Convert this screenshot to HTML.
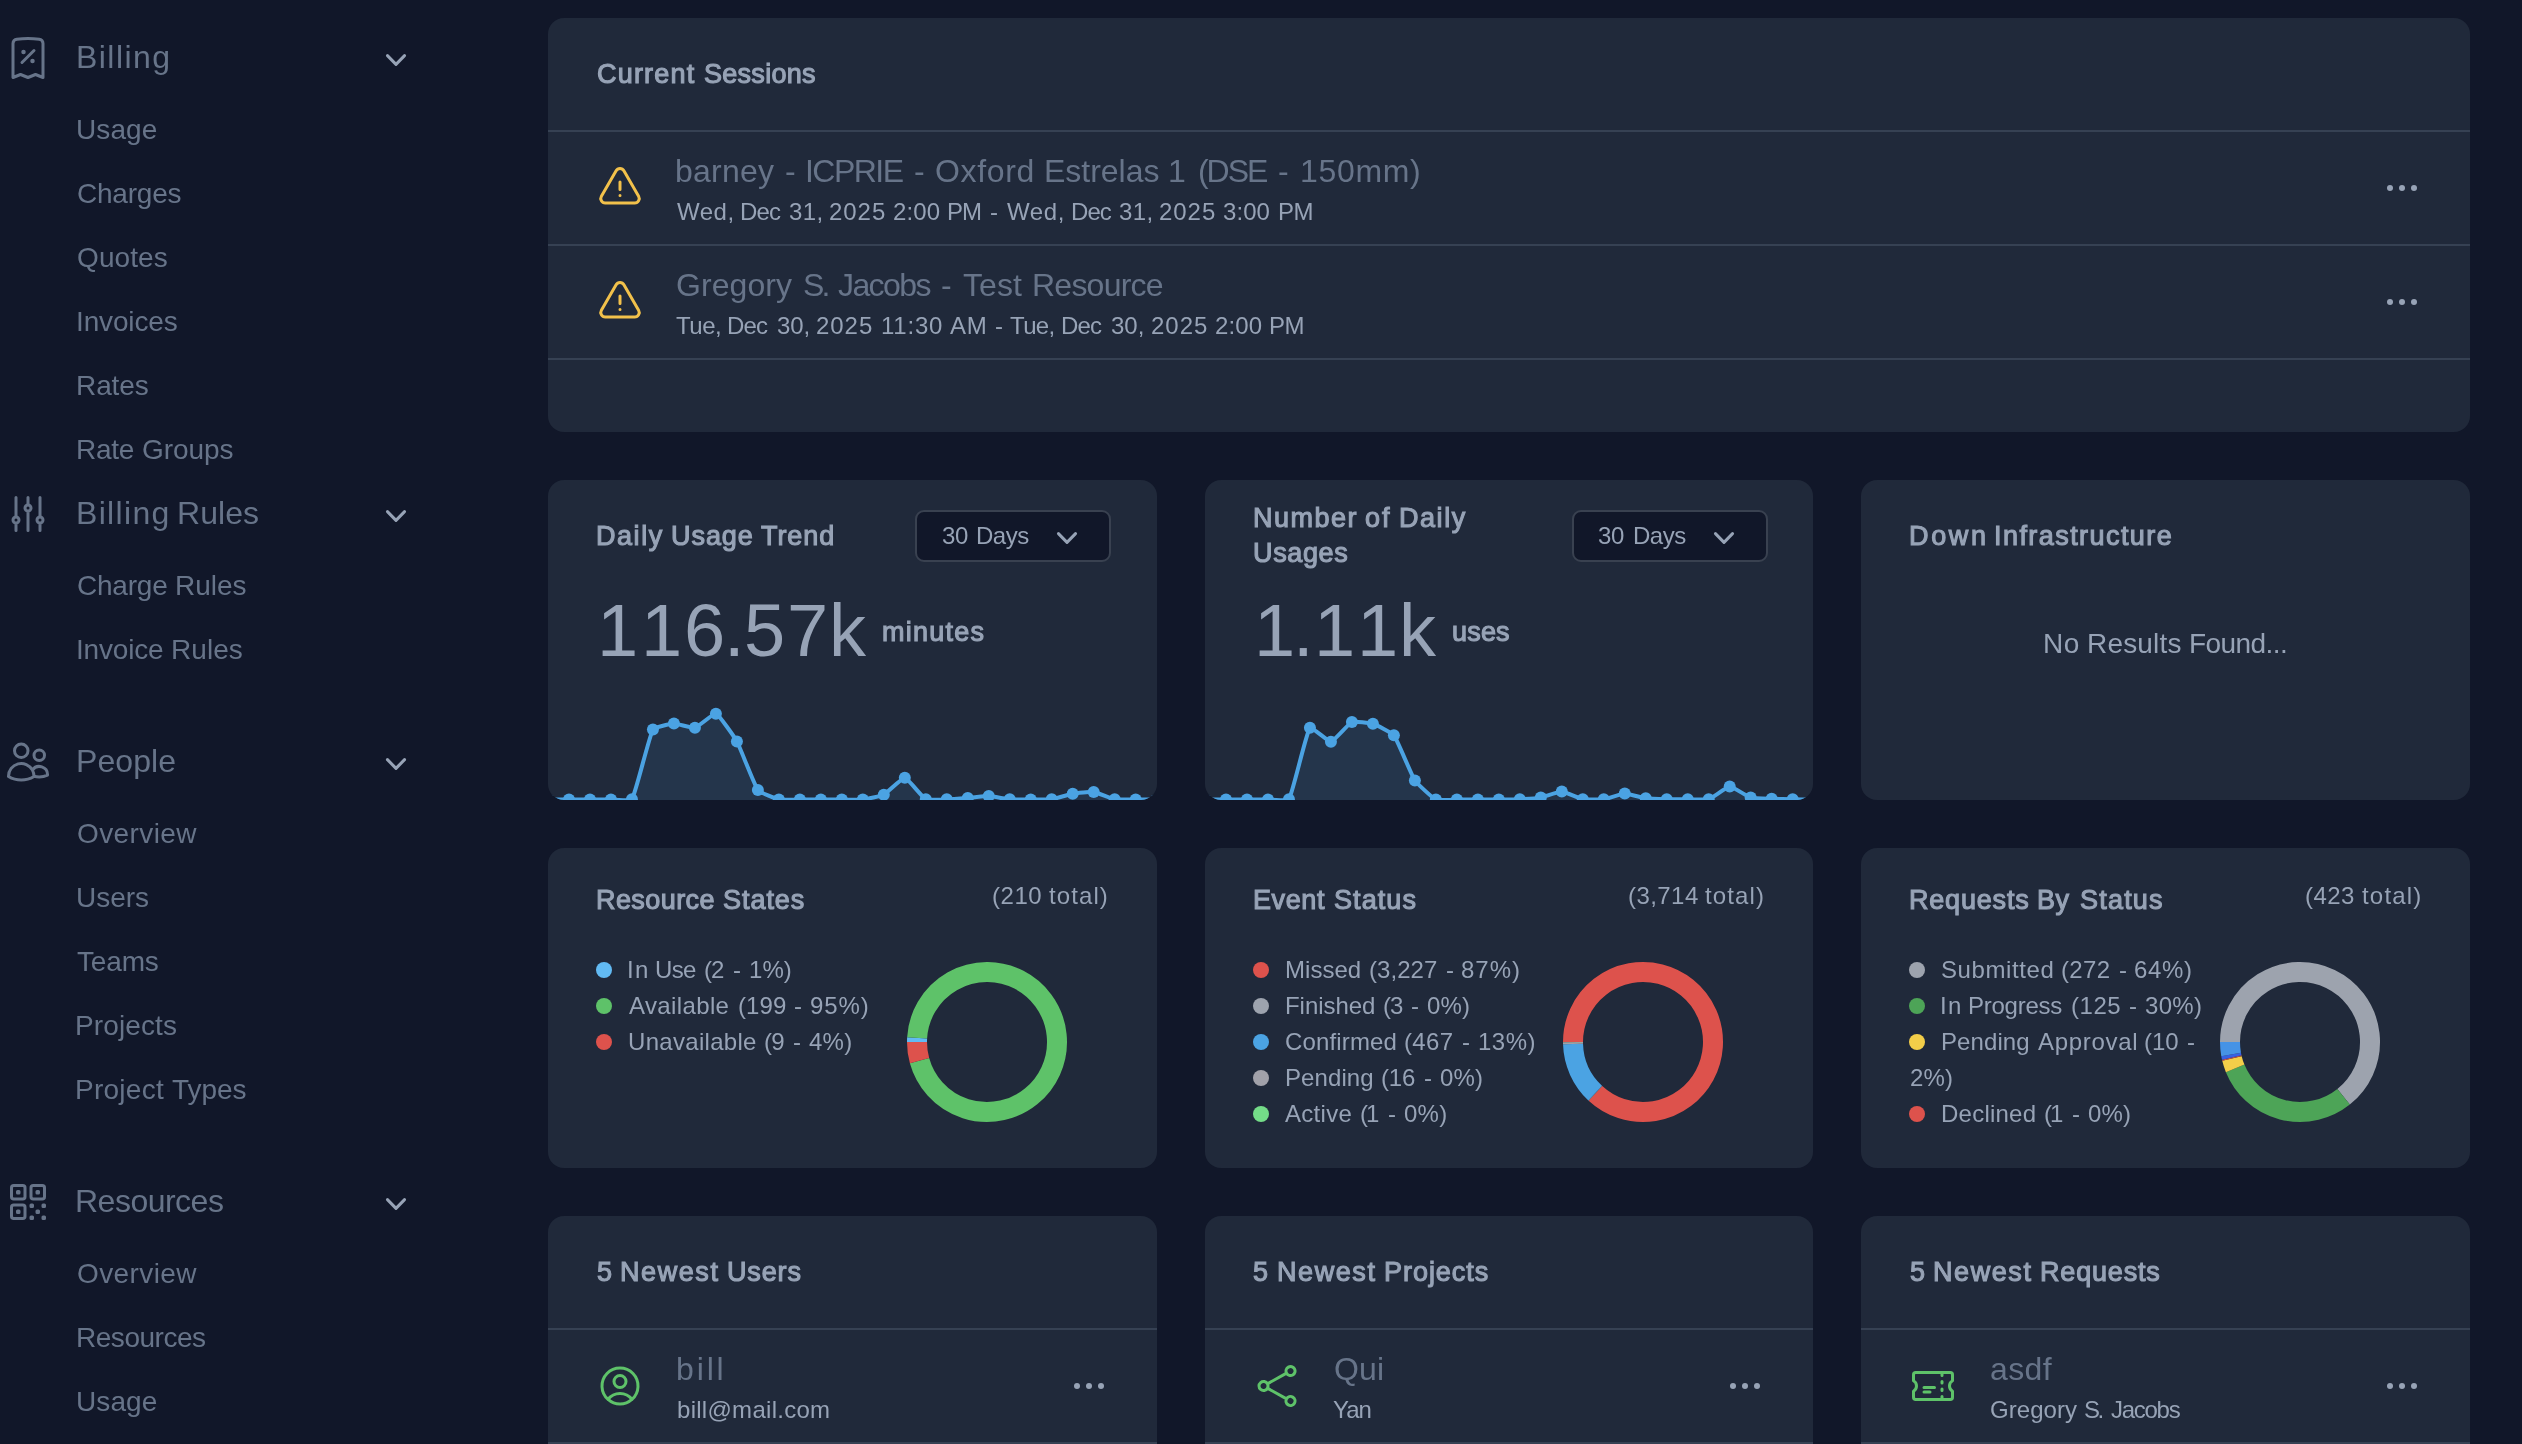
<!DOCTYPE html>
<html lang="en"><head><meta charset="utf-8"><title>Dashboard</title>
<style>
html,body{margin:0;padding:0;background:#111729;width:2522px;height:1444px;overflow:hidden}
body{position:relative;font-family:"Liberation Sans",sans-serif;color:#97a3b6}
.t{position:absolute;white-space:nowrap;line-height:1;display:block;will-change:transform}
.ic{position:absolute;display:block;overflow:visible}
.card{position:absolute;background:#20293a;border-radius:16px;overflow:hidden}
.hr{position:absolute;left:0;right:0;height:2px;background:#364153}
.ld{position:absolute;display:block;width:16px;height:16px;border-radius:50%}
.sel{position:absolute;box-sizing:border-box;width:196px;height:52px;border:2px solid #394150;border-radius:9px;background:#111729}
nav,main{position:absolute;left:0;top:0}
</style></head><body>
<nav><svg class="ic" style="left:4px;top:34px" width="48" height="48" viewBox="0 0 24 24" fill="none" stroke="#677489" stroke-width="1.5" stroke-linecap="round" stroke-linejoin="round"><path d="M9 14.25l6-6m4.5-3.493V21.75l-3.75-1.5-3.75 1.5-3.75-1.5-3.75 1.5V4.757c0-1.108.806-2.057 1.907-2.185a48.507 48.507 0 0111.186 0c1.1.128 1.907 1.077 1.907 2.185zM9.75 9h.008v.008H9.75V9zm.375 0a.375.375 0 11-.75 0 .375.375 0 01.75 0zm4.125 4.5h.008v.008h-.008V13.5zm.375 0a.375.375 0 11-.75 0 .375.375 0 01.75 0z"/></svg><svg class="ic" style="left:4px;top:490px" width="48" height="48" viewBox="0 0 24 24" fill="none" stroke="#677489" stroke-width="1.5" stroke-linecap="round" stroke-linejoin="round"><path d="M6 13.5V3.75m0 9.75a1.5 1.5 0 010 3m0-3a1.5 1.5 0 000 3m0 3.75V16.5m12-3V3.75m0 9.75a1.5 1.5 0 010 3m0-3a1.5 1.5 0 000 3m0 3.75V16.5m-6-9V3.75m0 3.75a1.5 1.5 0 010 3m0-3a1.5 1.5 0 000 3m0 9.75V10.5"/></svg><svg class="ic" style="left:4px;top:738px" width="48" height="48" viewBox="0 0 24 24" fill="none" stroke="#677489" stroke-width="1.5" stroke-linecap="round" stroke-linejoin="round"><path d="M15 19.128a9.38 9.38 0 002.625.372 9.337 9.337 0 004.121-.952 4.125 4.125 0 00-7.533-2.493M15 19.128v-.003c0-1.113-.285-2.16-.786-3.07M15 19.128v.106A12.318 12.318 0 018.624 21c-2.331 0-4.512-.645-6.374-1.766l-.001-.109a6.375 6.375 0 0111.964-3.07M12 6.375a3.375 3.375 0 11-6.75 0 3.375 3.375 0 016.75 0zm8.25 2.25a2.625 2.625 0 11-5.25 0 2.625 2.625 0 015.25 0z"/></svg><svg class="ic" style="left:4px;top:1178px" width="48" height="48" viewBox="0 0 24 24" fill="none" stroke="#677489" stroke-width="1.5" stroke-linecap="round" stroke-linejoin="round"><path d="M3.75 4.875c0-.621.504-1.125 1.125-1.125h4.5c.621 0 1.125.504 1.125 1.125v4.5c0 .621-.504 1.125-1.125 1.125h-4.5A1.125 1.125 0 013.75 9.375v-4.5zM3.75 14.625c0-.621.504-1.125 1.125-1.125h4.5c.621 0 1.125.504 1.125 1.125v4.5c0 .621-.504 1.125-1.125 1.125h-4.5a1.125 1.125 0 01-1.125-1.125v-4.5zM13.5 4.875c0-.621.504-1.125 1.125-1.125h4.5c.621 0 1.125.504 1.125 1.125v4.5c0 .621-.504 1.125-1.125 1.125h-4.5A1.125 1.125 0 0113.500 9.375v-4.5z"/><path d="M6.75 6.75h.75v.75h-.75v-.75zM6.75 16.5h.75v.75h-.75v-.75zM16.5 6.75h.75v.75h-.75v-.75zM13.5 13.5h.75v.75h-.75v-.75zM13.5 19.5h.75v.75h-.75v-.75zM19.5 13.5h.75v.75h-.75v-.75zM19.5 19.5h.75v.75h-.75v-.75zM16.5 16.5h.75v.75h-.75v-.75z"/></svg><svg class="ic" style="left:382.20px;top:46.00px" width="28" height="28" viewBox="382.20 46.00 28 28" fill="none" stroke="#97a3b6" stroke-width="3" stroke-linecap="round" stroke-linejoin="round"><path d="M387.65 55.65L396.20 64.35L404.75 55.65"/></svg><svg class="ic" style="left:382.20px;top:502.00px" width="28" height="28" viewBox="382.20 502.00 28 28" fill="none" stroke="#97a3b6" stroke-width="3" stroke-linecap="round" stroke-linejoin="round"><path d="M387.65 511.65L396.20 520.35L404.75 511.65"/></svg><svg class="ic" style="left:382.20px;top:750.00px" width="28" height="28" viewBox="382.20 750.00 28 28" fill="none" stroke="#97a3b6" stroke-width="3" stroke-linecap="round" stroke-linejoin="round"><path d="M387.65 759.65L396.20 768.35L404.75 759.65"/></svg><svg class="ic" style="left:382.20px;top:1190.00px" width="28" height="28" viewBox="382.20 1190.00 28 28" fill="none" stroke="#97a3b6" stroke-width="3" stroke-linecap="round" stroke-linejoin="round"><path d="M387.65 1199.65L396.20 1208.35L404.75 1199.65"/></svg><span class="t" style="left:76.00px;top:41.00px;font-size:32.0px;letter-spacing:1.454px;color:#677489">Billing</span><span class="ln"><span class="t" style="left:76.00px;top:497.00px;font-size:32.0px;letter-spacing:1.320px;color:#677489">Billing</span> <span class="t" style="left:177.20px;top:497.00px;font-size:32.0px;letter-spacing:0.072px;color:#677489">Rules</span></span><span class="t" style="left:76.00px;top:745.00px;font-size:32.0px;letter-spacing:0.091px;color:#677489">People</span><span class="t" style="left:75.40px;top:1185.00px;font-size:32.0px;letter-spacing:-0.507px;color:#677489">Resources</span><span class="t" style="left:75.50px;top:116.00px;font-size:28.0px;letter-spacing:0.084px;color:#677489">Usage</span><span class="t" style="left:76.50px;top:180.00px;font-size:28.0px;letter-spacing:-0.222px;color:#677489">Charges</span><span class="t" style="left:76.50px;top:244.00px;font-size:28.0px;letter-spacing:0.105px;color:#677489">Quotes</span><span class="t" style="left:75.50px;top:308.00px;font-size:28.0px;letter-spacing:-0.145px;color:#677489">Invoices</span><span class="t" style="left:75.50px;top:372.00px;font-size:28.0px;letter-spacing:-0.086px;color:#677489">Rates</span><span class="ln"><span class="t" style="left:75.50px;top:436.00px;font-size:28.0px;letter-spacing:-0.257px;color:#677489">Rate</span> <span class="t" style="left:142.30px;top:436.00px;font-size:28.0px;letter-spacing:-0.064px;color:#677489">Groups</span></span><span class="ln"><span class="t" style="left:76.50px;top:572.00px;font-size:28.0px;letter-spacing:-0.212px;color:#677489">Charge</span> <span class="t" style="left:174.70px;top:572.00px;font-size:28.0px;letter-spacing:0.004px;color:#677489">Rules</span></span><span class="ln"><span class="t" style="left:75.50px;top:636.00px;font-size:28.0px;letter-spacing:-0.191px;color:#677489">Invoice</span> <span class="t" style="left:170.50px;top:636.00px;font-size:28.0px;letter-spacing:0.054px;color:#677489">Rules</span></span><span class="t" style="left:76.50px;top:820.00px;font-size:28.0px;letter-spacing:0.390px;color:#677489">Overview</span><span class="t" style="left:75.50px;top:884.00px;font-size:28.0px;letter-spacing:-0.029px;color:#677489">Users</span><span class="t" style="left:76.50px;top:948.00px;font-size:28.0px;letter-spacing:-0.167px;color:#677489">Teams</span><span class="t" style="left:75.30px;top:1012.00px;font-size:28.0px;letter-spacing:0.122px;color:#677489">Projects</span><span class="ln"><span class="t" style="left:75.30px;top:1076.00px;font-size:28.0px;letter-spacing:0.256px;color:#677489">Project</span> <span class="t" style="left:171.70px;top:1076.00px;font-size:28.0px;letter-spacing:-0.026px;color:#677489">Types</span></span><span class="t" style="left:76.50px;top:1260.00px;font-size:28.0px;letter-spacing:0.390px;color:#677489">Overview</span><span class="t" style="left:75.50px;top:1324.00px;font-size:28.0px;letter-spacing:-0.467px;color:#677489">Resources</span><span class="t" style="left:75.50px;top:1388.00px;font-size:28.0px;letter-spacing:0.084px;color:#677489">Usage</span></nav>
<main>
<section class="card" style="left:548px;top:18px;width:1922px;height:414px"><div class="hr" style="top:112px"></div><div class="hr" style="top:226px"></div><div class="hr" style="top:340px"></div><svg class="ic" style="left:48px;top:146px" width="48" height="48" viewBox="0 0 24 24" fill="none" stroke="#f2c14b" stroke-width="1.5" stroke-linecap="round" stroke-linejoin="round"><path d="M12 9v3.750m-9.303 3.376c-.866 1.500.217 3.374 1.948 3.374h14.710c1.730 0 2.813-1.874 1.948-3.374L13.949 3.378c-.866-1.500-3.032-1.500-3.898 0L2.697 16.126zM12 15.750h.007v.008H12v-.008z"/></svg><svg class="ic" style="left:48px;top:260px" width="48" height="48" viewBox="0 0 24 24" fill="none" stroke="#f2c14b" stroke-width="1.5" stroke-linecap="round" stroke-linejoin="round"><path d="M12 9v3.750m-9.303 3.376c-.866 1.500.217 3.374 1.948 3.374h14.710c1.730 0 2.813-1.874 1.948-3.374L13.949 3.378c-.866-1.500-3.032-1.500-3.898 0L2.697 16.126zM12 15.750h.007v.008H12v-.008z"/></svg><svg class="ic" style="left:1838.00px;top:166px" width="32" height="8" viewBox="0 0 32 8" fill="#97a3b6"><circle cx="4" cy="4" r="3"/><circle cx="16" cy="4" r="3"/><circle cx="28" cy="4" r="3"/></svg><svg class="ic" style="left:1838.00px;top:280px" width="32" height="8" viewBox="0 0 32 8" fill="#97a3b6"><circle cx="4" cy="4" r="3"/><circle cx="16" cy="4" r="3"/><circle cx="28" cy="4" r="3"/></svg><span class="ln"><span class="t" style="left:48.75px;top:43.00px;font-size:27.0px;letter-spacing:1.195px;color:#97a3b6;-webkit-text-stroke:1.1px #97a3b6">Current</span> <span class="t" style="left:155.75px;top:43.00px;font-size:27.0px;letter-spacing:0.278px;color:#97a3b6;-webkit-text-stroke:1.1px #97a3b6">Sessions</span></span><span class="ln"><span class="t" style="left:127.00px;top:137.00px;font-size:32.0px;letter-spacing:0.251px;color:#677489">barney</span> <span class="t" style="left:236.80px;top:137.00px;font-size:32.0px;letter-spacing:0.000px;color:#677489">-</span> <span class="t" style="left:257.40px;top:137.00px;font-size:32.0px;letter-spacing:-1.529px;color:#677489">ICPRIE</span> <span class="t" style="left:366.25px;top:137.00px;font-size:32.0px;letter-spacing:0.000px;color:#677489">-</span> <span class="t" style="left:387.40px;top:137.00px;font-size:32.0px;letter-spacing:0.673px;color:#677489">Oxford</span> <span class="t" style="left:495.70px;top:137.00px;font-size:32.0px;letter-spacing:-0.013px;color:#677489">Estrelas</span> <span class="t" style="left:619.85px;top:137.00px;font-size:32.0px;letter-spacing:0.000px;color:#677489">1</span> <span class="t" style="left:649.50px;top:137.00px;font-size:32.0px;letter-spacing:-2.036px;color:#677489">(DSE</span> <span class="t" style="left:729.65px;top:137.00px;font-size:32.0px;letter-spacing:0.000px;color:#677489">-</span> <span class="t" style="left:751.80px;top:137.00px;font-size:32.0px;letter-spacing:0.679px;color:#677489">150mm)</span></span><span class="ln"><span class="t" style="left:129.00px;top:182.00px;font-size:24.0px;letter-spacing:0.495px;color:#97a3b6">Wed,</span> <span class="t" style="left:192.30px;top:182.00px;font-size:24.0px;letter-spacing:-0.890px;color:#97a3b6">Dec</span> <span class="t" style="left:241.00px;top:182.00px;font-size:24.0px;letter-spacing:0.402px;color:#97a3b6">31,</span> <span class="t" style="left:280.90px;top:182.00px;font-size:24.0px;letter-spacing:0.952px;color:#97a3b6">2025</span> <span class="t" style="left:345.00px;top:182.00px;font-size:24.0px;letter-spacing:0.146px;color:#97a3b6">2:00</span> <span class="t" style="left:399.40px;top:182.00px;font-size:24.0px;letter-spacing:-1.008px;color:#97a3b6">PM</span> <span class="t" style="left:442.15px;top:182.00px;font-size:24.0px;letter-spacing:0.000px;color:#97a3b6">-</span> <span class="t" style="left:459.20px;top:182.00px;font-size:24.0px;letter-spacing:0.629px;color:#97a3b6">Wed,</span> <span class="t" style="left:522.50px;top:182.00px;font-size:24.0px;letter-spacing:-0.940px;color:#97a3b6">Dec</span> <span class="t" style="left:571.10px;top:182.00px;font-size:24.0px;letter-spacing:0.402px;color:#97a3b6">31,</span> <span class="t" style="left:610.90px;top:182.00px;font-size:24.0px;letter-spacing:0.952px;color:#97a3b6">2025</span> <span class="t" style="left:675.20px;top:182.00px;font-size:24.0px;letter-spacing:0.079px;color:#97a3b6">3:00</span> <span class="t" style="left:729.50px;top:182.00px;font-size:24.0px;letter-spacing:-0.508px;color:#97a3b6">PM</span></span><span class="ln"><span class="t" style="left:128.30px;top:251.00px;font-size:32.0px;letter-spacing:0.084px;color:#677489">Gregory</span> <span class="t" style="left:255.00px;top:251.00px;font-size:32.0px;letter-spacing:-2.944px;color:#677489">S.</span> <span class="t" style="left:290.20px;top:251.00px;font-size:32.0px;letter-spacing:-1.598px;color:#677489">Jacobs</span> <span class="t" style="left:393.35px;top:251.00px;font-size:32.0px;letter-spacing:0.000px;color:#677489">-</span> <span class="t" style="left:415.10px;top:251.00px;font-size:32.0px;letter-spacing:0.101px;color:#677489">Test</span> <span class="t" style="left:484.40px;top:251.00px;font-size:32.0px;letter-spacing:-0.765px;color:#677489">Resource</span></span><span class="ln"><span class="t" style="left:128.00px;top:296.00px;font-size:24.0px;letter-spacing:-0.488px;color:#97a3b6">Tue,</span> <span class="t" style="left:179.30px;top:296.00px;font-size:24.0px;letter-spacing:-0.840px;color:#97a3b6">Dec</span> <span class="t" style="left:228.60px;top:296.00px;font-size:24.0px;letter-spacing:-0.048px;color:#97a3b6">30,</span> <span class="t" style="left:268.40px;top:296.00px;font-size:24.0px;letter-spacing:0.952px;color:#97a3b6">2025</span> <span class="t" style="left:333.30px;top:296.00px;font-size:24.0px;letter-spacing:0.768px;color:#97a3b6">11:30</span> <span class="t" style="left:401.80px;top:296.00px;font-size:24.0px;letter-spacing:0.792px;color:#97a3b6">AM</span> <span class="t" style="left:446.65px;top:296.00px;font-size:24.0px;letter-spacing:0.000px;color:#97a3b6">-</span> <span class="t" style="left:462.00px;top:296.00px;font-size:24.0px;letter-spacing:-0.622px;color:#97a3b6">Tue,</span> <span class="t" style="left:513.30px;top:296.00px;font-size:24.0px;letter-spacing:-0.790px;color:#97a3b6">Dec</span> <span class="t" style="left:562.70px;top:296.00px;font-size:24.0px;letter-spacing:0.002px;color:#97a3b6">30,</span> <span class="t" style="left:602.50px;top:296.00px;font-size:24.0px;letter-spacing:0.986px;color:#97a3b6">2025</span> <span class="t" style="left:666.70px;top:296.00px;font-size:24.0px;letter-spacing:0.112px;color:#97a3b6">2:00</span> <span class="t" style="left:721.10px;top:296.00px;font-size:24.0px;letter-spacing:-0.608px;color:#97a3b6">PM</span></span></section>
<section class="card" style="left:548px;top:480px;width:608.67px;height:320px"><svg class="ic" style="left:0;top:0" width="608.67" height="320" viewBox="0 0 608.67 320"><path d="M0.00 319.60C2.52 319.60 18.47 319.60 20.99 319.60C23.51 319.60 39.46 319.60 41.98 319.60C44.50 319.60 60.45 319.62 62.97 319.60C65.48 319.58 82.83 321.08 83.95 319.20C87.86 312.68 101.07 256.58 104.94 249.60C106.11 247.50 123.39 243.61 125.93 243.50C128.43 243.39 144.61 248.34 146.92 247.80C149.65 247.16 165.79 233.01 167.91 233.70C170.82 234.64 186.90 257.77 188.90 261.40C191.94 266.93 206.38 305.14 209.89 310.00C211.42 312.12 228.24 319.00 230.87 319.60C233.27 320.15 249.34 319.60 251.86 319.60C254.38 319.60 270.33 319.60 272.85 319.60C275.37 319.60 291.32 319.60 293.84 319.60C296.36 319.60 312.34 319.89 314.83 319.60C317.38 319.30 333.58 315.86 335.82 314.70C338.62 313.25 354.42 297.54 356.81 297.80C359.46 298.09 374.83 317.78 377.80 319.30C379.87 320.36 396.27 319.38 398.78 319.30C401.31 319.22 417.26 318.09 419.77 317.90C422.29 317.71 438.25 316.02 440.76 316.10C443.29 316.18 459.22 319.09 461.75 319.30C464.25 319.51 480.22 319.60 482.74 319.60C485.26 319.60 501.25 319.65 503.73 319.30C506.29 318.94 522.16 314.15 524.72 313.70C527.20 313.26 543.25 311.57 545.70 311.90C548.29 312.25 564.10 318.82 566.69 319.30C569.14 319.75 585.16 319.58 587.68 319.60C590.20 319.62 606.15 319.60 608.67 319.60L608.67 330L0 330Z" fill="#4ba3e3" fill-opacity="0.1"/><path d="M0.00 319.60C2.52 319.60 18.47 319.60 20.99 319.60C23.51 319.60 39.46 319.60 41.98 319.60C44.50 319.60 60.45 319.62 62.97 319.60C65.48 319.58 82.83 321.08 83.95 319.20C87.86 312.68 101.07 256.58 104.94 249.60C106.11 247.50 123.39 243.61 125.93 243.50C128.43 243.39 144.61 248.34 146.92 247.80C149.65 247.16 165.79 233.01 167.91 233.70C170.82 234.64 186.90 257.77 188.90 261.40C191.94 266.93 206.38 305.14 209.89 310.00C211.42 312.12 228.24 319.00 230.87 319.60C233.27 320.15 249.34 319.60 251.86 319.60C254.38 319.60 270.33 319.60 272.85 319.60C275.37 319.60 291.32 319.60 293.84 319.60C296.36 319.60 312.34 319.89 314.83 319.60C317.38 319.30 333.58 315.86 335.82 314.70C338.62 313.25 354.42 297.54 356.81 297.80C359.46 298.09 374.83 317.78 377.80 319.30C379.87 320.36 396.27 319.38 398.78 319.30C401.31 319.22 417.26 318.09 419.77 317.90C422.29 317.71 438.25 316.02 440.76 316.10C443.29 316.18 459.22 319.09 461.75 319.30C464.25 319.51 480.22 319.60 482.74 319.60C485.26 319.60 501.25 319.65 503.73 319.30C506.29 318.94 522.16 314.15 524.72 313.70C527.20 313.26 543.25 311.57 545.70 311.90C548.29 312.25 564.10 318.82 566.69 319.30C569.14 319.75 585.16 319.58 587.68 319.60C590.20 319.62 606.15 319.60 608.67 319.60" fill="none" stroke="#4ba3e3" stroke-width="4" stroke-linejoin="round"/><g fill="#4ba3e3"><circle cx="0.00" cy="319.60" r="6"/><circle cx="20.99" cy="319.60" r="6"/><circle cx="41.98" cy="319.60" r="6"/><circle cx="62.97" cy="319.60" r="6"/><circle cx="83.95" cy="319.20" r="6"/><circle cx="104.94" cy="249.60" r="6"/><circle cx="125.93" cy="243.50" r="6"/><circle cx="146.92" cy="247.80" r="6"/><circle cx="167.91" cy="233.70" r="6"/><circle cx="188.90" cy="261.40" r="6"/><circle cx="209.89" cy="310.00" r="6"/><circle cx="230.87" cy="319.60" r="6"/><circle cx="251.86" cy="319.60" r="6"/><circle cx="272.85" cy="319.60" r="6"/><circle cx="293.84" cy="319.60" r="6"/><circle cx="314.83" cy="319.60" r="6"/><circle cx="335.82" cy="314.70" r="6"/><circle cx="356.81" cy="297.80" r="6"/><circle cx="377.80" cy="319.30" r="6"/><circle cx="398.78" cy="319.30" r="6"/><circle cx="419.77" cy="317.90" r="6"/><circle cx="440.76" cy="316.10" r="6"/><circle cx="461.75" cy="319.30" r="6"/><circle cx="482.74" cy="319.60" r="6"/><circle cx="503.73" cy="319.30" r="6"/><circle cx="524.72" cy="313.70" r="6"/><circle cx="545.70" cy="311.90" r="6"/><circle cx="566.69" cy="319.30" r="6"/><circle cx="587.68" cy="319.60" r="6"/><circle cx="608.67" cy="319.60" r="6"/></g></svg><div class="sel" style="left:367px;top:30px"></div><svg class="ic" style="left:505.20px;top:44.00px" width="28" height="28" viewBox="505.20 44.00 28 28" fill="none" stroke="#97a3b6" stroke-width="3" stroke-linecap="round" stroke-linejoin="round"><path d="M510.65 53.65L519.20 62.35L527.75 53.65"/></svg><span class="ln"><span class="t" style="left:47.75px;top:43.00px;font-size:27.0px;letter-spacing:1.547px;color:#97a3b6;-webkit-text-stroke:1.1px #97a3b6">Daily</span> <span class="t" style="left:122.75px;top:43.00px;font-size:27.0px;letter-spacing:0.942px;color:#97a3b6;-webkit-text-stroke:1.1px #97a3b6">Usage</span> <span class="t" style="left:213.05px;top:43.00px;font-size:27.0px;letter-spacing:0.921px;color:#97a3b6;-webkit-text-stroke:1.1px #97a3b6">Trend</span></span><span class="ln"><span class="t" style="left:49.30px;top:114.00px;font-size:74px;letter-spacing:0.000px;color:#97a3b6">1</span><span class="t" style="left:92.85px;top:114.00px;font-size:74px;letter-spacing:0.000px;color:#97a3b6">1</span><span class="t" style="left:136.05px;top:114.00px;font-size:74px;letter-spacing:0.000px;color:#97a3b6">6</span><span class="t" style="left:175.70px;top:114.00px;font-size:74px;letter-spacing:0.000px;color:#97a3b6">.</span><span class="t" style="left:196.00px;top:114.00px;font-size:74px;letter-spacing:0.000px;color:#97a3b6">5</span><span class="t" style="left:238.50px;top:114.00px;font-size:74px;letter-spacing:0.000px;color:#97a3b6">7</span><span class="t" style="left:280.95px;top:114.00px;font-size:74px;letter-spacing:0.000px;color:#97a3b6">k</span></span><span class="t" style="left:334.25px;top:139.00px;font-size:27.0px;letter-spacing:1.227px;color:#97a3b6;-webkit-text-stroke:1.1px #97a3b6">minutes</span><span class="ln"><span class="t" style="left:393.70px;top:44.00px;font-size:24.0px;letter-spacing:-0.248px;color:#97a3b6">30</span> <span class="t" style="left:428.20px;top:44.00px;font-size:24.0px;letter-spacing:-0.493px;color:#97a3b6">Days</span></span></section>
<section class="card" style="left:1204.67px;top:480px;width:608.67px;height:320px"><svg class="ic" style="left:0;top:0" width="608.67" height="320" viewBox="0 0 608.67 320"><path d="M0.00 319.60C2.52 319.60 18.47 319.60 20.99 319.60C23.51 319.60 39.46 319.60 41.98 319.60C44.50 319.60 60.45 319.62 62.97 319.60C65.48 319.58 82.85 321.10 83.95 319.20C87.88 312.48 101.18 252.94 104.94 247.80C106.22 246.06 123.58 262.12 125.93 261.80C128.62 261.43 144.01 243.26 146.92 242.00C149.05 241.08 165.55 242.95 167.91 243.70C170.59 244.55 187.26 253.09 188.90 255.30C192.30 259.90 206.68 295.58 209.89 300.50C211.71 303.30 227.98 318.28 230.87 319.60C233.02 320.57 249.34 319.60 251.86 319.60C254.38 319.60 270.33 319.60 272.85 319.60C275.37 319.60 291.32 319.62 293.84 319.60C296.36 319.58 312.32 319.43 314.83 319.30C317.35 319.17 333.34 317.85 335.82 317.40C338.38 316.93 354.32 311.49 356.81 311.60C359.36 311.72 375.20 318.82 377.80 319.30C380.23 319.75 396.31 319.64 398.78 319.30C401.35 318.95 417.24 313.56 419.77 313.50C422.28 313.44 438.21 317.95 440.76 318.30C443.25 318.64 459.23 319.24 461.75 319.30C464.27 319.36 480.22 319.30 482.74 319.30C485.26 319.30 501.40 320.00 503.73 319.30C506.44 318.48 522.15 306.70 524.72 306.60C527.19 306.50 543.03 316.82 545.70 317.60C548.07 318.29 564.17 318.70 566.69 318.80C569.21 318.90 585.16 319.25 587.68 319.30C590.20 319.35 606.15 319.56 608.67 319.60L608.67 330L0 330Z" fill="#4ba3e3" fill-opacity="0.1"/><path d="M0.00 319.60C2.52 319.60 18.47 319.60 20.99 319.60C23.51 319.60 39.46 319.60 41.98 319.60C44.50 319.60 60.45 319.62 62.97 319.60C65.48 319.58 82.85 321.10 83.95 319.20C87.88 312.48 101.18 252.94 104.94 247.80C106.22 246.06 123.58 262.12 125.93 261.80C128.62 261.43 144.01 243.26 146.92 242.00C149.05 241.08 165.55 242.95 167.91 243.70C170.59 244.55 187.26 253.09 188.90 255.30C192.30 259.90 206.68 295.58 209.89 300.50C211.71 303.30 227.98 318.28 230.87 319.60C233.02 320.57 249.34 319.60 251.86 319.60C254.38 319.60 270.33 319.60 272.85 319.60C275.37 319.60 291.32 319.62 293.84 319.60C296.36 319.58 312.32 319.43 314.83 319.30C317.35 319.17 333.34 317.85 335.82 317.40C338.38 316.93 354.32 311.49 356.81 311.60C359.36 311.72 375.20 318.82 377.80 319.30C380.23 319.75 396.31 319.64 398.78 319.30C401.35 318.95 417.24 313.56 419.77 313.50C422.28 313.44 438.21 317.95 440.76 318.30C443.25 318.64 459.23 319.24 461.75 319.30C464.27 319.36 480.22 319.30 482.74 319.30C485.26 319.30 501.40 320.00 503.73 319.30C506.44 318.48 522.15 306.70 524.72 306.60C527.19 306.50 543.03 316.82 545.70 317.60C548.07 318.29 564.17 318.70 566.69 318.80C569.21 318.90 585.16 319.25 587.68 319.30C590.20 319.35 606.15 319.56 608.67 319.60" fill="none" stroke="#4ba3e3" stroke-width="4" stroke-linejoin="round"/><g fill="#4ba3e3"><circle cx="0.00" cy="319.60" r="6"/><circle cx="20.99" cy="319.60" r="6"/><circle cx="41.98" cy="319.60" r="6"/><circle cx="62.97" cy="319.60" r="6"/><circle cx="83.95" cy="319.20" r="6"/><circle cx="104.94" cy="247.80" r="6"/><circle cx="125.93" cy="261.80" r="6"/><circle cx="146.92" cy="242.00" r="6"/><circle cx="167.91" cy="243.70" r="6"/><circle cx="188.90" cy="255.30" r="6"/><circle cx="209.89" cy="300.50" r="6"/><circle cx="230.87" cy="319.60" r="6"/><circle cx="251.86" cy="319.60" r="6"/><circle cx="272.85" cy="319.60" r="6"/><circle cx="293.84" cy="319.60" r="6"/><circle cx="314.83" cy="319.30" r="6"/><circle cx="335.82" cy="317.40" r="6"/><circle cx="356.81" cy="311.60" r="6"/><circle cx="377.80" cy="319.30" r="6"/><circle cx="398.78" cy="319.30" r="6"/><circle cx="419.77" cy="313.50" r="6"/><circle cx="440.76" cy="318.30" r="6"/><circle cx="461.75" cy="319.30" r="6"/><circle cx="482.74" cy="319.30" r="6"/><circle cx="503.73" cy="319.30" r="6"/><circle cx="524.72" cy="306.60" r="6"/><circle cx="545.70" cy="317.60" r="6"/><circle cx="566.69" cy="318.80" r="6"/><circle cx="587.68" cy="319.30" r="6"/><circle cx="608.67" cy="319.60" r="6"/></g></svg><div class="sel" style="left:367px;top:30px"></div><svg class="ic" style="left:505.20px;top:44.00px" width="28" height="28" viewBox="505.20 44.00 28 28" fill="none" stroke="#97a3b6" stroke-width="3" stroke-linecap="round" stroke-linejoin="round"><path d="M510.65 53.65L519.20 62.35L527.75 53.65"/></svg><span class="ln"><span class="t" style="left:48.08px;top:25.00px;font-size:27.0px;letter-spacing:1.472px;color:#97a3b6;-webkit-text-stroke:1.1px #97a3b6">Number</span> <span class="t" style="left:160.68px;top:25.00px;font-size:27.0px;letter-spacing:1.884px;color:#97a3b6;-webkit-text-stroke:1.1px #97a3b6">of</span> <span class="t" style="left:193.88px;top:25.00px;font-size:27.0px;letter-spacing:1.547px;color:#97a3b6;-webkit-text-stroke:1.1px #97a3b6">Daily</span></span><span class="t" style="left:48.08px;top:60.00px;font-size:27.0px;letter-spacing:0.631px;color:#97a3b6;-webkit-text-stroke:1.1px #97a3b6">Usages</span><span class="ln"><span class="t" style="left:49.63px;top:114.00px;font-size:74px;letter-spacing:0.000px;color:#97a3b6">1</span><span class="t" style="left:88.58px;top:114.00px;font-size:74px;letter-spacing:0.000px;color:#97a3b6">.</span><span class="t" style="left:109.13px;top:114.00px;font-size:74px;letter-spacing:0.000px;color:#97a3b6">1</span><span class="t" style="left:152.43px;top:114.00px;font-size:74px;letter-spacing:0.000px;color:#97a3b6">1</span><span class="t" style="left:194.18px;top:114.00px;font-size:74px;letter-spacing:0.000px;color:#97a3b6">k</span></span><span class="t" style="left:247.68px;top:139.00px;font-size:27.0px;letter-spacing:0.189px;color:#97a3b6;-webkit-text-stroke:1.1px #97a3b6">uses</span><span class="ln"><span class="t" style="left:393.70px;top:44.00px;font-size:24.0px;letter-spacing:-0.248px;color:#97a3b6">30</span> <span class="t" style="left:428.20px;top:44.00px;font-size:24.0px;letter-spacing:-0.493px;color:#97a3b6">Days</span></span></section>
<section class="card" style="left:1861.33px;top:480px;width:608.67px;height:320px"><span class="ln"><span class="t" style="left:47.32px;top:43.00px;font-size:27.0px;letter-spacing:2.662px;color:#97a3b6;-webkit-text-stroke:1.1px #97a3b6">Down</span> <span class="t" style="left:133.12px;top:43.00px;font-size:27.0px;letter-spacing:1.435px;color:#97a3b6;-webkit-text-stroke:1.1px #97a3b6">Infrastructure</span></span><span class="ln"><span class="t" style="left:182.17px;top:150.00px;font-size:28.0px;letter-spacing:0.579px;color:#97a3b6">No</span> <span class="t" style="left:225.97px;top:150.00px;font-size:28.0px;letter-spacing:0.172px;color:#97a3b6">Results</span> <span class="t" style="left:327.37px;top:150.00px;font-size:28.0px;letter-spacing:-0.579px;color:#97a3b6">Found...</span></span></section>
<section class="card" style="left:548px;top:848px;width:608.67px;height:320px"><svg class="ic" style="left:358.80px;top:114px" width="160" height="160" viewBox="0 0 160 160" fill="none" stroke-width="20"><path d="M10.000 80.000A70 70 0 0 1 10.125 75.814" stroke="#62baf3"/><path d="M10.125 75.814A70 70 0 1 1 12.523 98.623" stroke="#5ec269"/><path d="M12.523 98.623A70 70 0 0 1 10.000 80.000" stroke="#dd524c"/></svg><i class="ld" style="left:48.00px;top:114px;background:#62baf3"></i><i class="ld" style="left:48.00px;top:150px;background:#5ec269"></i><i class="ld" style="left:48.00px;top:186px;background:#dd524c"></i><span class="ln"><span class="t" style="left:47.75px;top:39.00px;font-size:27.0px;letter-spacing:0.423px;color:#97a3b6;-webkit-text-stroke:1.1px #97a3b6">Resource</span> <span class="t" style="left:175.35px;top:39.00px;font-size:27.0px;letter-spacing:0.951px;color:#97a3b6;-webkit-text-stroke:1.1px #97a3b6">States</span></span><span class="ln"><span class="t" style="left:443.80px;top:36.00px;font-size:24.0px;letter-spacing:0.537px;color:#97a3b6">(210</span> <span class="t" style="left:500.90px;top:36.00px;font-size:24.0px;letter-spacing:1.087px;color:#97a3b6">total)</span></span><span class="ln"><span class="t" style="left:79.20px;top:110.00px;font-size:24.0px;letter-spacing:1.332px;color:#97a3b6">In</span> <span class="t" style="left:106.50px;top:110.00px;font-size:24.0px;letter-spacing:-0.666px;color:#97a3b6">Use</span> <span class="t" style="left:155.70px;top:110.00px;font-size:24.0px;letter-spacing:-0.892px;color:#97a3b6">(2</span> <span class="t" style="left:184.75px;top:110.00px;font-size:24.0px;letter-spacing:0.000px;color:#97a3b6">-</span> <span class="t" style="left:200.70px;top:110.00px;font-size:24.0px;letter-spacing:0.056px;color:#97a3b6">1%)</span></span><span class="ln"><span class="t" style="left:81.20px;top:146.00px;font-size:24.0px;letter-spacing:0.373px;color:#97a3b6">Available</span> <span class="t" style="left:189.50px;top:146.00px;font-size:24.0px;letter-spacing:0.104px;color:#97a3b6">(199</span> <span class="t" style="left:246.35px;top:146.00px;font-size:24.0px;letter-spacing:0.000px;color:#97a3b6">-</span> <span class="t" style="left:261.50px;top:146.00px;font-size:24.0px;letter-spacing:0.888px;color:#97a3b6">95%)</span></span><span class="ln"><span class="t" style="left:80.20px;top:182.00px;font-size:24.0px;letter-spacing:0.303px;color:#97a3b6">Unavailable</span> <span class="t" style="left:215.60px;top:182.00px;font-size:24.0px;letter-spacing:-0.792px;color:#97a3b6">(9</span> <span class="t" style="left:244.75px;top:182.00px;font-size:24.0px;letter-spacing:0.000px;color:#97a3b6">-</span> <span class="t" style="left:260.80px;top:182.00px;font-size:24.0px;letter-spacing:0.256px;color:#97a3b6">4%)</span></span></section>
<section class="card" style="left:1204.67px;top:848px;width:608.67px;height:320px"><svg class="ic" style="left:358.80px;top:114px" width="160" height="160" viewBox="0 0 160 160" fill="none" stroke-width="20"><path d="M10.000 80.000A70 70 0 1 1 32.444 131.365" stroke="#dd524c"/><path d="M32.444 131.365A70 70 0 0 1 32.184 131.123" stroke="#9da3ae"/><path d="M32.184 131.123A70 70 0 0 1 10.029 82.013" stroke="#4ba3e3"/><path d="M10.029 82.013A70 70 0 0 1 10.000 80.118" stroke="#a1a1a9"/><path d="M10.000 80.118A70 70 0 0 1 10.000 80.000" stroke="#74dc88"/></svg><i class="ld" style="left:48.00px;top:114px;background:#dd524c"></i><i class="ld" style="left:48.00px;top:150px;background:#9da3ae"></i><i class="ld" style="left:48.00px;top:186px;background:#4ba3e3"></i><i class="ld" style="left:48.00px;top:222px;background:#a1a1a9"></i><i class="ld" style="left:48.00px;top:258px;background:#74dc88"></i><span class="ln"><span class="t" style="left:48.68px;top:39.00px;font-size:27.0px;letter-spacing:0.590px;color:#97a3b6;-webkit-text-stroke:1.1px #97a3b6">Event</span> <span class="t" style="left:129.78px;top:39.00px;font-size:27.0px;letter-spacing:1.071px;color:#97a3b6;-webkit-text-stroke:1.1px #97a3b6">Status</span></span><span class="ln"><span class="t" style="left:423.33px;top:36.00px;font-size:24.0px;letter-spacing:0.439px;color:#97a3b6">(3,714</span> <span class="t" style="left:500.83px;top:36.00px;font-size:24.0px;letter-spacing:1.107px;color:#97a3b6">total)</span></span><span class="ln"><span class="t" style="left:80.53px;top:110.00px;font-size:24.0px;letter-spacing:0.026px;color:#97a3b6">Missed</span> <span class="t" style="left:163.93px;top:110.00px;font-size:24.0px;letter-spacing:0.059px;color:#97a3b6">(3,227</span> <span class="t" style="left:241.03px;top:110.00px;font-size:24.0px;letter-spacing:0.000px;color:#97a3b6">-</span> <span class="t" style="left:255.93px;top:110.00px;font-size:24.0px;letter-spacing:0.988px;color:#97a3b6">87%)</span></span><span class="ln"><span class="t" style="left:80.53px;top:146.00px;font-size:24.0px;letter-spacing:-0.052px;color:#97a3b6">Finished</span> <span class="t" style="left:177.93px;top:146.00px;font-size:24.0px;letter-spacing:-1.092px;color:#97a3b6">(3</span> <span class="t" style="left:206.53px;top:146.00px;font-size:24.0px;letter-spacing:0.000px;color:#97a3b6">-</span> <span class="t" style="left:222.83px;top:146.00px;font-size:24.0px;letter-spacing:0.156px;color:#97a3b6">0%)</span></span><span class="ln"><span class="t" style="left:80.53px;top:182.00px;font-size:24.0px;letter-spacing:0.155px;color:#97a3b6">Confirmed</span> <span class="t" style="left:199.83px;top:182.00px;font-size:24.0px;letter-spacing:0.371px;color:#97a3b6">(467</span> <span class="t" style="left:257.33px;top:182.00px;font-size:24.0px;letter-spacing:0.000px;color:#97a3b6">-</span> <span class="t" style="left:273.43px;top:182.00px;font-size:24.0px;letter-spacing:0.488px;color:#97a3b6">13%)</span></span><span class="ln"><span class="t" style="left:80.53px;top:218.00px;font-size:24.0px;letter-spacing:0.095px;color:#97a3b6">Pending</span> <span class="t" style="left:176.33px;top:218.00px;font-size:24.0px;letter-spacing:-0.170px;color:#97a3b6">(16</span> <span class="t" style="left:219.23px;top:218.00px;font-size:24.0px;letter-spacing:0.000px;color:#97a3b6">-</span> <span class="t" style="left:235.33px;top:218.00px;font-size:24.0px;letter-spacing:0.156px;color:#97a3b6">0%)</span></span><span class="ln"><span class="t" style="left:80.83px;top:254.00px;font-size:24.0px;letter-spacing:0.298px;color:#97a3b6">Active</span> <span class="t" style="left:155.53px;top:254.00px;font-size:24.0px;letter-spacing:-1.992px;color:#97a3b6">(1</span> <span class="t" style="left:183.38px;top:254.00px;font-size:24.0px;letter-spacing:0.000px;color:#97a3b6">-</span> <span class="t" style="left:199.83px;top:254.00px;font-size:24.0px;letter-spacing:0.256px;color:#97a3b6">0%)</span></span></section>
<section class="card" style="left:1861.33px;top:848px;width:608.67px;height:320px"><svg class="ic" style="left:358.80px;top:114px" width="160" height="160" viewBox="0 0 160 160" fill="none" stroke-width="20"><path d="M10.000 80.000A70 70 0 1 1 123.586 134.774" stroke="#9da3ae"/><path d="M123.586 134.774A70 70 0 0 1 15.156 106.367" stroke="#4da457"/><path d="M15.156 106.367A70 70 0 0 1 11.968 96.480" stroke="#f3ce49"/><path d="M11.968 96.480A70 70 0 0 1 11.730 95.468" stroke="#dd524c"/><path d="M11.730 95.468A70 70 0 0 1 11.109 92.411" stroke="#3760e5"/><path d="M11.109 92.411A70 70 0 0 1 10.000 80.000" stroke="#4693e6"/></svg><i class="ld" style="left:48.00px;top:114px;background:#9da3ae"></i><i class="ld" style="left:48.00px;top:150px;background:#4da457"></i><i class="ld" style="left:48.00px;top:186px;background:#f3ce49"></i><i class="ld" style="left:48.00px;top:258px;background:#dd524c"></i><span class="ln"><span class="t" style="left:47.42px;top:39.00px;font-size:27.0px;letter-spacing:0.805px;color:#97a3b6;-webkit-text-stroke:1.1px #97a3b6">Requests</span> <span class="t" style="left:175.72px;top:39.00px;font-size:27.0px;letter-spacing:0.491px;color:#97a3b6;-webkit-text-stroke:1.1px #97a3b6">By</span> <span class="t" style="left:218.32px;top:39.00px;font-size:27.0px;letter-spacing:1.211px;color:#97a3b6;-webkit-text-stroke:1.1px #97a3b6">Status</span></span><span class="ln"><span class="t" style="left:443.57px;top:36.00px;font-size:24.0px;letter-spacing:0.404px;color:#97a3b6">(423</span> <span class="t" style="left:500.57px;top:36.00px;font-size:24.0px;letter-spacing:1.187px;color:#97a3b6">total)</span></span><span class="ln"><span class="t" style="left:79.87px;top:110.00px;font-size:24.0px;letter-spacing:0.586px;color:#97a3b6">Submitted</span> <span class="t" style="left:199.97px;top:110.00px;font-size:24.0px;letter-spacing:0.337px;color:#97a3b6">(272</span> <span class="t" style="left:257.52px;top:110.00px;font-size:24.0px;letter-spacing:0.000px;color:#97a3b6">-</span> <span class="t" style="left:272.77px;top:110.00px;font-size:24.0px;letter-spacing:0.622px;color:#97a3b6">64%)</span></span><span class="ln"><span class="t" style="left:78.87px;top:146.00px;font-size:24.0px;letter-spacing:1.332px;color:#97a3b6">In</span> <span class="t" style="left:107.07px;top:146.00px;font-size:24.0px;letter-spacing:-0.262px;color:#97a3b6">Progress</span> <span class="t" style="left:209.47px;top:146.00px;font-size:24.0px;letter-spacing:0.537px;color:#97a3b6">(125</span> <span class="t" style="left:267.52px;top:146.00px;font-size:24.0px;letter-spacing:0.000px;color:#97a3b6">-</span> <span class="t" style="left:283.77px;top:146.00px;font-size:24.0px;letter-spacing:0.288px;color:#97a3b6">30%)</span></span><span class="ln"><span class="t" style="left:79.87px;top:182.00px;font-size:24.0px;letter-spacing:0.095px;color:#97a3b6">Pending</span> <span class="t" style="left:176.37px;top:182.00px;font-size:24.0px;letter-spacing:0.687px;color:#97a3b6">Approval</span> <span class="t" style="left:282.77px;top:182.00px;font-size:24.0px;letter-spacing:-0.020px;color:#97a3b6">(10</span> <span class="t" style="left:325.37px;top:182.00px;font-size:24.0px;letter-spacing:0.000px;color:#97a3b6">-</span></span><span class="t" style="left:48.37px;top:218.00px;font-size:24.0px;letter-spacing:0.206px;color:#97a3b6">2%)</span><span class="ln"><span class="t" style="left:80.17px;top:254.00px;font-size:24.0px;letter-spacing:0.237px;color:#97a3b6">Declined</span> <span class="t" style="left:182.87px;top:254.00px;font-size:24.0px;letter-spacing:-1.992px;color:#97a3b6">(1</span> <span class="t" style="left:210.82px;top:254.00px;font-size:24.0px;letter-spacing:0.000px;color:#97a3b6">-</span> <span class="t" style="left:227.17px;top:254.00px;font-size:24.0px;letter-spacing:0.206px;color:#97a3b6">0%)</span></span></section>
<section class="card" style="left:548px;top:1216px;width:608.67px;height:228px;border-radius:16px 16px 0 0"><div class="hr" style="top:112px"></div><div class="hr" style="top:226px"></div><svg class="ic" style="left:48px;top:146px" width="48" height="48" viewBox="0 0 24 24" fill="none" stroke="#5ec269" stroke-width="1.5" stroke-linecap="round" stroke-linejoin="round"><path d="M17.982 18.725A7.488 7.488 0 0012 15.750a7.488 7.488 0 00-5.982 2.975m11.963 0a9 9 0 10-11.963 0m11.963 0A8.966 8.966 0 0112 21a8.966 8.966 0 01-5.982-2.275M15 9.750a3 3 0 11-6 0 3 3 0 016 0z"/></svg><svg class="ic" style="left:524.67px;top:166px" width="32" height="8" viewBox="0 0 32 8" fill="#97a3b6"><circle cx="4" cy="4" r="3"/><circle cx="16" cy="4" r="3"/><circle cx="28" cy="4" r="3"/></svg><span class="ln"><span class="t" style="left:48.75px;top:43.00px;font-size:27.0px;letter-spacing:0.000px;color:#97a3b6;-webkit-text-stroke:1.1px #97a3b6">5</span> <span class="t" style="left:71.85px;top:43.00px;font-size:27.0px;letter-spacing:1.574px;color:#97a3b6;-webkit-text-stroke:1.1px #97a3b6">Newest</span> <span class="t" style="left:178.55px;top:43.00px;font-size:27.0px;letter-spacing:0.849px;color:#97a3b6;-webkit-text-stroke:1.1px #97a3b6">Users</span></span><span class="t" style="left:127.70px;top:137.00px;font-size:32.0px;letter-spacing:2.861px;color:#677489">bill</span><span class="t" style="left:128.70px;top:182.00px;font-size:24.0px;letter-spacing:0.281px;color:#97a3b6">bill@mail.com</span></section>
<section class="card" style="left:1204.67px;top:1216px;width:608.67px;height:228px;border-radius:16px 16px 0 0"><div class="hr" style="top:112px"></div><div class="hr" style="top:226px"></div><svg class="ic" style="left:48px;top:146px" width="48" height="48" viewBox="0 0 24 24" fill="none" stroke="#5ec269" stroke-width="1.5" stroke-linecap="round" stroke-linejoin="round"><path d="M7.217 10.907a2.250 2.250 0 100 2.186m0-2.186c.180.324.283.696.283 1.093s-.103.770-.283 1.093m0-2.186l9.566-5.314m-9.566 7.500l9.566 5.314m0 0a2.250 2.250 0 103.935 2.186 2.250 2.250 0 00-3.935-2.186zm0-12.814a2.250 2.250 0 103.933-2.185 2.250 2.250 0 00-3.933 2.185z"/></svg><svg class="ic" style="left:524.67px;top:166px" width="32" height="8" viewBox="0 0 32 8" fill="#97a3b6"><circle cx="4" cy="4" r="3"/><circle cx="16" cy="4" r="3"/><circle cx="28" cy="4" r="3"/></svg><span class="ln"><span class="t" style="left:48.83px;top:43.00px;font-size:27.0px;letter-spacing:0.000px;color:#97a3b6;-webkit-text-stroke:1.1px #97a3b6">5</span> <span class="t" style="left:72.18px;top:43.00px;font-size:27.0px;letter-spacing:1.574px;color:#97a3b6;-webkit-text-stroke:1.1px #97a3b6">Newest</span> <span class="t" style="left:178.88px;top:43.00px;font-size:27.0px;letter-spacing:0.953px;color:#97a3b6;-webkit-text-stroke:1.1px #97a3b6">Projects</span></span><span class="t" style="left:129.03px;top:137.00px;font-size:32.0px;letter-spacing:0.156px;color:#677489">Qui</span><span class="t" style="left:128.63px;top:182.00px;font-size:24.0px;letter-spacing:-1.037px;color:#97a3b6">Yan</span></section>
<section class="card" style="left:1861.33px;top:1216px;width:608.67px;height:228px;border-radius:16px 16px 0 0"><div class="hr" style="top:112px"></div><div class="hr" style="top:226px"></div><svg class="ic" style="left:48px;top:146px" width="48" height="48" viewBox="0 0 24 24" fill="none" stroke="#5ec269" stroke-width="1.5" stroke-linecap="round" stroke-linejoin="round"><path d="M16.500 6v.750m0 3v.750m0 3v.750m0 3V18m-9-5.250h5.250M7.500 15h3M3.375 5.250c-.621 0-1.125.504-1.125 1.125v3.026a2.999 2.999 0 010 5.198v3.026c0 .621.504 1.125 1.125 1.125h17.250c.621 0 1.125-.504 1.125-1.125v-3.026a2.999 2.999 0 010-5.198V6.375c0-.621-.504-1.125-1.125-1.125H3.375z"/></svg><svg class="ic" style="left:524.67px;top:166px" width="32" height="8" viewBox="0 0 32 8" fill="#97a3b6"><circle cx="4" cy="4" r="3"/><circle cx="16" cy="4" r="3"/><circle cx="28" cy="4" r="3"/></svg><span class="ln"><span class="t" style="left:48.92px;top:43.00px;font-size:27.0px;letter-spacing:0.000px;color:#97a3b6;-webkit-text-stroke:1.1px #97a3b6">5</span> <span class="t" style="left:72.02px;top:43.00px;font-size:27.0px;letter-spacing:1.574px;color:#97a3b6;-webkit-text-stroke:1.1px #97a3b6">Newest</span> <span class="t" style="left:179.02px;top:43.00px;font-size:27.0px;letter-spacing:0.819px;color:#97a3b6;-webkit-text-stroke:1.1px #97a3b6">Requests</span></span><span class="t" style="left:128.67px;top:137.00px;font-size:32.0px;letter-spacing:0.402px;color:#677489">asdf</span><span class="ln"><span class="t" style="left:128.37px;top:182.00px;font-size:24.0px;letter-spacing:0.067px;color:#97a3b6">Gregory</span> <span class="t" style="left:222.77px;top:182.00px;font-size:24.0px;letter-spacing:-2.508px;color:#97a3b6">S.</span> <span class="t" style="left:249.67px;top:182.00px;font-size:24.0px;letter-spacing:-1.269px;color:#97a3b6">Jacobs</span></span></section>
</main>
</body></html>
